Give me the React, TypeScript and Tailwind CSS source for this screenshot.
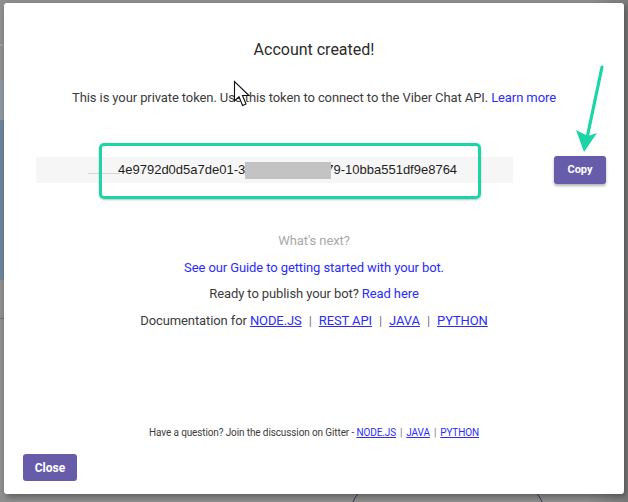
import React from "react";

const roboto = { fontFamily: "Roboto, 'Noto Sans', sans-serif" };

function Cursor() {
  return (
    <svg
      className="absolute left-[229px] top-[77px]"
      width="20"
      height="28"
      viewBox="0 0 20 28"
    >
      <path
        d="M1.5 1.5 L1.5 21 L6 16.8 L9.6 25.5 L13 24 L9.5 15.5 L16 15.5 Z"
        fill="#ffffff"
        stroke="#111111"
        strokeWidth="1.1"
        strokeLinejoin="miter"
      />
    </svg>
  );
}

function GreenArrow() {
  return (
    <svg
      className="absolute left-[570px] top-[60px]"
      width="44"
      height="100"
      viewBox="0 0 44 100"
    >
      <line x1="32" y1="7" x2="17" y2="78" stroke="#1bd5a7" strokeWidth="3.2" strokeLinecap="round" />
      <path d="M6 70 L14 92 L27 73 L18 76 Z" fill="#1bd5a7" />
    </svg>
  );
}

export default function App() {
  return (
    <div className="relative w-[628px] h-[502px] overflow-hidden bg-[#8f8f8f]" style={roboto}>
      {/* dimmed background page */}
      <div className="absolute left-0 top-[44px] w-full h-[2px] bg-[#a49e8c]" />
      <div className="absolute left-0 top-[80px] w-full h-[200px] bg-[#6d859c]" />
      <div className="absolute left-0 top-[80px] w-full h-[40px] bg-[#8a9aa0]" />
      <div className="absolute right-0 top-[45px] w-[10px] h-[70px] bg-[#6d849b]" />
      <div className="absolute left-0 top-[318px] w-full h-[1px] bg-[#6e6e6e]" />
      <div className="absolute left-[345px] top-[470px] w-[205px] h-[120px] rounded-full border border-[#3b3a5c]" />
      <div className="absolute right-0 bottom-0 w-[40px] h-[502px] bg-gradient-to-r from-transparent to-[#7a7a7a]" />

      {/* modal */}
      <div className="absolute left-[4px] top-[3px] w-[620px] h-[491px] bg-white rounded-[3px] shadow-[2px_3px_6px_rgba(0,0,0,0.35)] flex flex-col">
        <div className="flex flex-col items-center pt-[37px]">
          <div className="text-[16px] leading-[20px] text-[#2b2b2b]">Account created!</div>
          <div className="mt-[29px] text-[13px] leading-[18px] tracking-[-0.1px] text-[#3c3c3c]">
            This is your private token. Use this token to connect to the Viber Chat API.{" "}
            <span className="text-[#2b2bff]">Learn more</span>
          </div>
        </div>

        <div className="relative mt-[50px] h-[26px] flex items-start">
          <div className="relative ml-[32px] w-[477px] h-[26px] bg-[#f7f6f7] flex items-center">
            <div className="absolute left-[52px] top-[16px] w-[32px] h-[1px] bg-[#d6d6d6]" />
            <div
              className="ml-[82px] flex items-center text-[13px] text-[#1e1e1e]"
              style={{ fontFamily: "'Liberation Sans', Arial, sans-serif" }}
            >
              <span>4e9792d0d5a7de01-3</span>
              <span className="relative z-10 inline-block w-[86px] h-[17px] bg-[#c3c3c3] mr-[-5px] blur-[0.6px]" />
              <span>79-10bba551df9e8764</span>
            </div>
          </div>
          <button className="ml-[41px] -mt-[1px] w-[52px] h-[28px] rounded-[3px] bg-[#675ca9] text-white text-[11px] font-bold shadow-[0_2px_3px_rgba(0,0,0,0.3)]">
            Copy
          </button>
          <div className="absolute left-[95px] top-[-14px] w-[382px] h-[56px] border-[3px] border-[#1bd5a7] rounded-[5px] shadow-[0_1px_2px_rgba(0,0,0,0.25)]" />
        </div>

        <div className="flex flex-col items-center text-[13px] leading-[18px] tracking-[-0.1px] text-[#3c3c3c]">
          <div className="mt-[49px] text-[#a8a8a8]">What's next?</div>
          <div className="mt-[9px] text-[#2b2bff]">See our Guide to getting started with your bot.</div>
          <div className="mt-[8px]">
            Ready to publish your bot? <span className="text-[#2b2bff]">Read here</span>
          </div>
          <div className="mt-[9px]">
            Documentation for <span className="text-[#2b2bff] underline">NODE.JS</span>
            <span className="text-[#777] mx-[7px]">|</span>
            <span className="text-[#2b2bff] underline">REST API</span>
            <span className="text-[#777] mx-[7px]">|</span>
            <span className="text-[#2b2bff] underline">JAVA</span>
            <span className="text-[#777] mx-[7px]">|</span>
            <span className="text-[#2b2bff] underline">PYTHON</span>
          </div>
        </div>

        <div className="mt-auto flex justify-center text-[10px] leading-[14px] tracking-[-0.12px] text-[#3c3c3c]">
          <span>
            Have a question? Join the discussion on Gitter -{" "}
            <span className="text-[#2b2bff] underline">NODE.JS</span>
            <span className="text-[#777] mx-[4px]">|</span>
            <span className="text-[#2b2bff] underline">JAVA</span>
            <span className="text-[#777] mx-[4px]">|</span>
            <span className="text-[#2b2bff] underline">PYTHON</span>
          </span>
        </div>
        <button className="self-start ml-[19px] mt-[14px] mb-[13px] w-[54px] h-[27px] rounded-[3px] bg-[#675ca9] text-white text-[12px] font-bold">
          Close
        </button>

        <Cursor />
      </div>
      <GreenArrow />
    </div>
  );
}
